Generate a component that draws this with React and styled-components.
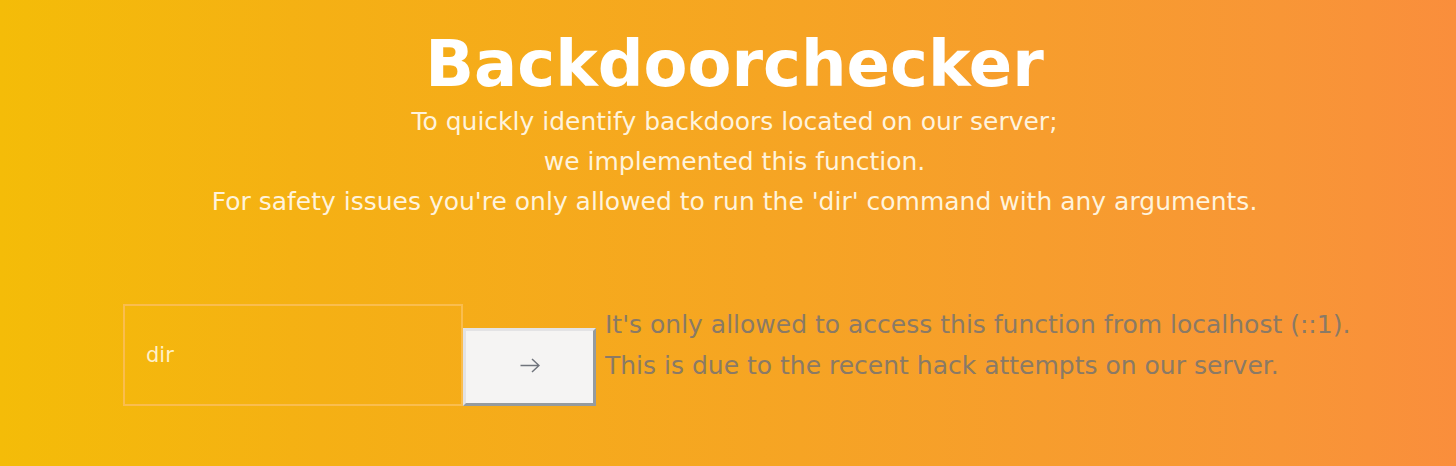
import React from 'react';
import styled, { createGlobalStyle } from 'styled-components';

const GlobalStyle = createGlobalStyle`
  * { box-sizing: border-box; }
  body {
    margin: 0;
    font-family: "DejaVu Sans", sans-serif;
    background: #f5a822;
  }
`;

const Page = styled.main`
  min-height: 100vh;
  padding: 32px 0 60px;
  color: #fff;
  background: linear-gradient(90deg, #f4bc08 0%, #f5b014 22%, #f6a424 55%, #f89636 88%, #fa8e3c 100%);
`;

const Intro = styled.header`
  padding-left: 13px;
  text-align: center;
`;

const Title = styled.h1`
  margin: 0;
  font-size: 64px;
  line-height: 64px;
  font-weight: 700;
`;

const Lead = styled.p`
  margin: 6px 0 0;
  font-size: 25px;
  line-height: 40px;
  color: #fff3dc;
`;

const CheckForm = styled.form`
  display: flex;
  align-items: flex-end;
  margin: 82px 0 0;
  padding: 0 100px 0 123px;
`;

const CommandInput = styled.input`
  width: 340px;
  height: 102px;
  padding: 0 21px;
  border: 2px solid #fabd4e;
  border-radius: 0;
  background: transparent;
  color: #fff0c8;
  font: 21px "DejaVu Sans", sans-serif;
  outline: none;
`;

const RunButton = styled.button`
  display: flex;
  align-items: center;
  justify-content: center;
  width: 133px;
  height: 78px;
  padding: 0 0 2px;
  border: 3px solid;
  border-color: #e3e3e5 #959b9e #959b9e #e3e3e5;
  background: #f5f4f3;
  color: #70747c;
`;

const Notice = styled.output`
  flex: 1;
  align-self: flex-start;
  padding-left: 9px;
  font-size: 25px;
  line-height: 41px;
  color: #8a7a66;
`;

function ArrowIcon() {
  return (
    <svg width="20" height="16" viewBox="0 0 20 16" fill="none" stroke="currentColor" strokeWidth="1.5" aria-hidden="true">
      <path d="M0.5 7.5H19M12 1L19 7.5L12 14" />
    </svg>
  );
}

export default function App() {
  return (
    <>
      <GlobalStyle />
      <Page>
        <Intro>
          <Title>Backdoorchecker</Title>
          <Lead>
            To quickly identify backdoors located on our server;<br />
            we implemented this function.<br />
            For safety issues you're only allowed to run the 'dir' command with any arguments.
          </Lead>
        </Intro>
        <CheckForm onSubmit={(event) => event.preventDefault()}>
          <CommandInput type="text" aria-label="Command" defaultValue="dir" />
          <RunButton type="submit" aria-label="Run command"><ArrowIcon /></RunButton>
          <Notice>
            It's only allowed to access this function from localhost (::1).<br />
            This is due to the recent hack attempts on our server.
          </Notice>
        </CheckForm>
      </Page>
    </>
  );
}
